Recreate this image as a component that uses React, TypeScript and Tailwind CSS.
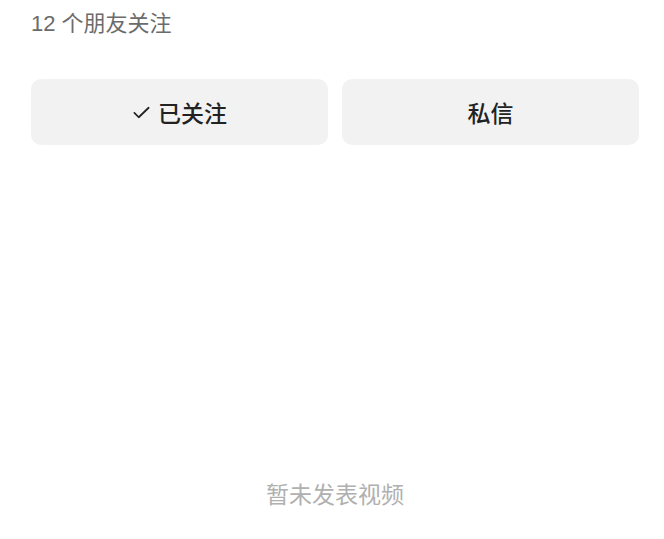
import React from 'react';

const CheckIcon: React.FC = () => (
  <svg className="w-[19px] h-[19px]" viewBox="0 0 24 24" fill="none" stroke="currentColor">
    <path strokeLinecap="round" strokeLinejoin="round" strokeWidth={2.2} d="M3 12.5l5.5 5.5L21 6" />
  </svg>
);

const App: React.FC = () => {
  return (
    <div
      className="w-[664px] h-[539px] bg-white flex flex-col pl-[31px] pr-[25px]"
      style={{ fontFamily: '"Noto Sans CJK SC", "Liberation Sans", sans-serif' }}
    >
      <div className="pt-[10px] text-[22px] leading-[28px] text-[#6b6b6b]" style={{ fontFamily: '"Liberation Sans", "Noto Sans CJK SC", sans-serif' }}>
        12 个朋友关注
      </div>

      <div className="mt-[41px] grid grid-cols-2 gap-[14px]">
        <button className="h-[66px] rounded-[10px] bg-[#f2f2f2] flex items-center justify-center gap-[7px] text-[23px] font-medium text-[#222222]">
          <CheckIcon />
          <span>已关注</span>
        </button>
        <button className="h-[66px] rounded-[10px] bg-[#f2f2f2] flex items-center justify-center text-[23px] font-medium text-[#222222]">
          私信
        </button>
      </div>

      <div className="mt-[333px] text-center text-[23px] leading-[30px] text-[#b0b0b0]">
        暂未发表视频
      </div>
    </div>
  );
};

export default App;
